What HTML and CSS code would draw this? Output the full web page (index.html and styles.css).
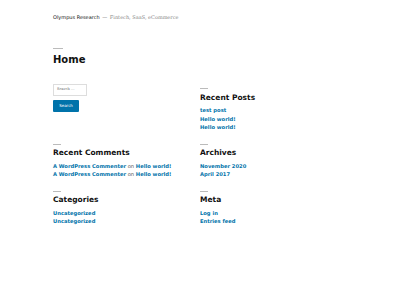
FILE: index.html
```html
<!DOCTYPE html>
<html>
<head>
<meta charset="utf-8">
<link rel="stylesheet" href="styles.css">
</head>
<body>
<div class="page">
  <header class="site-header">
    <span class="site-title">Olympus Research</span>
    <span class="dash">—</span>
    <span class="tagline">Fintech, SaaS, eCommerce</span>
  </header>
  <div class="entry-header">
    <div class="rule big"></div>
    <h1 class="entry-title">Home</h1>
  </div>
  <div class="widgets">
    <div class="widget search-widget">
      <div class="search-field">Search …</div>
      <div class="search-btn">Search</div>
    </div>
    <div class="widget">
      <div class="rule"></div>
      <h2 class="widget-title">Recent Posts</h2>
      <ul class="links">
        <li><a>test post</a></li>
        <li><a>Hello world!</a></li>
        <li><a>Hello world!</a></li>
      </ul>
    </div>
    <div class="widget">
      <div class="rule"></div>
      <h2 class="widget-title">Recent Comments</h2>
      <ul class="links">
        <li><a>A WordPress Commenter</a> <span class="on">on</span> <a>Hello world!</a></li>
        <li><a>A WordPress Commenter</a> <span class="on">on</span> <a>Hello world!</a></li>
      </ul>
    </div>
    <div class="widget">
      <div class="rule"></div>
      <h2 class="widget-title">Archives</h2>
      <ul class="links">
        <li><a>November 2020</a></li>
        <li><a>April 2017</a></li>
      </ul>
    </div>
    <div class="widget">
      <div class="rule"></div>
      <h2 class="widget-title">Categories</h2>
      <ul class="links">
        <li><a>Uncategorized</a></li>
        <li><a>Uncategorized</a></li>
      </ul>
    </div>
    <div class="widget">
      <div class="rule"></div>
      <h2 class="widget-title">Meta</h2>
      <ul class="links">
        <li><a>Log in</a></li>
        <li><a>Entries feed</a></li>
      </ul>
    </div>
  </div>
</div>
</body>
</html>
```
FILE: styles.css
```css
html, body {
  margin: 0;
  padding: 0;
  background: #fff;
}
body {
  font-family: "DejaVu Sans", sans-serif;
  color: #111;
}
.page {
  padding: 0 53px;
}
.site-header {
  padding-top: 13px;
  line-height: 8px;
  height: 8px;
  font-size: 5px;
  white-space: nowrap;
}
.site-title {
  color: #111;
}
.dash {
  color: #767676;
  margin: 0 1px;
}
.tagline {
  font-family: "DejaVu Serif", serif;
  color: #888;
}
.rule {
  width: 8px;
  height: 1px;
  background: #bbb;
}
.rule.big {
  width: 10px;
}
.entry-header {
  padding-top: 27.2px;
}
.entry-title {
  margin: 4.5px 0 0;
  font-size: 10px;
  line-height: 12px;
  font-weight: bold;
}
.widgets {
  margin-top: 18.5px;
  display: grid;
  grid-template-columns: 147px 147px;
  row-gap: 8.4px;
}
.widget {
  padding-top: 4.2px;
}
.search-widget {
  padding-top: 0;
}
.search-field {
  box-sizing: border-box;
  width: 34px;
  height: 11.4px;
  border: 1px solid #ddd;
  font-family: "DejaVu Serif", serif;
  font-size: 3.6px;
  line-height: 9.4px;
  padding-left: 3px;
  color: #666;
}
.search-btn {
  margin-top: 4.3px;
  width: 26px;
  height: 12.3px;
  background: #0073aa;
  color: #fff;
  font-size: 4px;
  line-height: 12.3px;
  text-align: center;
  border-radius: 1px;
}
.widget-title {
  margin: 3.8px 0 0;
  font-size: 7.5px;
  line-height: 10px;
  font-weight: bold;
}
.links {
  list-style: none;
  margin: 3.2px 0 0;
  padding: 0;
  font-size: 5.2px;
  line-height: 8.2px;
}
.links a {
  color: #0073aa;
  font-weight: bold;
}
.on {
  color: #555;
}
```
